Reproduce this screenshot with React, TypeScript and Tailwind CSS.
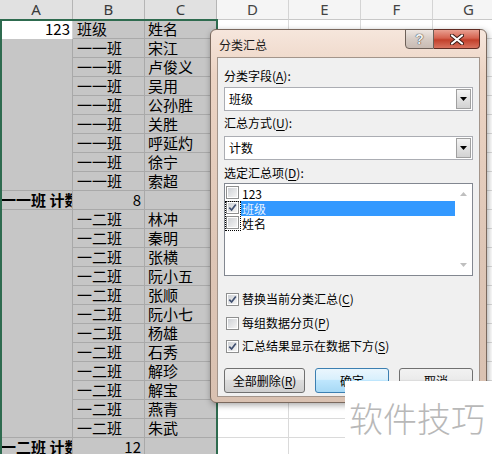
import React from 'react';

const CJK = "font-['Noto_Sans_CJK_SC','Noto_Sans',sans-serif]";

type Row = { a?: string; b?: string; c?: string; kind: 'head' | 'item' | 'count' };

const names1 = ['宋江', '卢俊义', '吴用', '公孙胜', '关胜', '呼延灼', '徐宁', '索超'];
const names2 = ['林冲', '秦明', '张横', '阮小五', '张顺', '阮小七', '杨雄', '石秀', '解珍', '解宝', '燕青', '朱武'];

const rows: Row[] = [
  { a: '123', b: '班级', c: '姓名', kind: 'head' },
  ...names1.map((c) => ({ b: '一一班', c, kind: 'item' as const })),
  { a: '一一班 计数', b: '8', kind: 'count' },
  ...names2.map((c) => ({ b: '一二班', c, kind: 'item' as const })),
  { a: '一二班 计数', b: '12', kind: 'count' },
  { kind: 'item' },
];

function SheetRow({ row, next }: { row: Row; next?: Row }) {
  const aBottom = row.kind === 'count' || next?.kind === 'count';
  return (
    <div className={`flex h-[19px] shrink-0 ${CJK} text-[15px] leading-[18px] text-black`}>
      <div
        className={`w-[73px] shrink-0 whitespace-nowrap border-r ${
          row.kind === 'head' ? 'bg-white border-[#d4d4d4] text-right pr-[2px]' : 'bg-[#c6c6c6] border-[#a9a9a9]'
        } ${aBottom ? 'border-b border-b-[#a9a9a9]' : ''} ${row.kind === 'count' ? 'font-bold pl-[1px] overflow-x-clip' : ''}`}
      >
        {row.a}
      </div>
      <div
        className={`w-[72px] shrink-0 whitespace-nowrap border-r border-b bg-[#c6c6c6] border-[#a9a9a9] ${
          row.kind === 'count' ? 'text-right pr-[3px]' : 'pl-[4px]'
        }`}
      >
        {row.b}
      </div>
      <div className="w-[72px] shrink-0 whitespace-nowrap border-r border-b bg-[#c6c6c6] border-[#a9a9a9] pl-[3px]">
        {row.c}
      </div>
      {[0, 1, 2, 3].map((i) => (
        <div key={i} className="w-[72px] shrink-0 border-r border-b border-[#dadada] bg-white" />
      ))}
    </div>
  );
}

function Check({ checked }: { checked: boolean }) {
  return (
    <span className="relative inline-block h-[13px] w-[13px] shrink-0 border border-[#8e8f8f] bg-white p-[1px]">
      <span className="block h-full w-full bg-[linear-gradient(135deg,#cfd2d6,#f4f4f4)]" />
      {checked && (
        <svg className="absolute left-[1px] top-[1px]" width="9" height="9" viewBox="0 0 9 9">
          <path d="M1.3 4.6 L3.6 7 L7.8 1.4" stroke="#3f4f70" strokeWidth="1.7" fill="none" />
        </svg>
      )}
    </span>
  );
}

function U({ children }: { children: React.ReactNode }) {
  return <span className="underline underline-offset-[2px]">{children}</span>;
}

function Combo({ value }: { value: string }) {
  return (
    <div className="flex h-[24px] w-[249px] items-center border border-[#abadb3] bg-white">
      <span className="flex-1 pl-[4px] text-[12px]">{value}</span>
      <div className="mr-[1px] flex h-[20px] w-[15px] items-center justify-center border border-[#a0a0a0] bg-[linear-gradient(to_bottom,#f4f4f4,#e2e2e2_50%,#d2d2d2)]">
        <svg width="7" height="4" viewBox="0 0 7 4">
          <path d="M0 0 L7 0 L3.5 4 Z" fill="#000" />
        </svg>
      </div>
    </div>
  );
}

function Dialog() {
  const items = [
    { label: '123', checked: false, sel: false },
    { label: '班级', checked: true, sel: true },
    { label: '姓名', checked: false, sel: false },
  ];
  return (
    <div
      className={`absolute left-[210px] top-[29px] flex h-[374px] w-[277px] flex-col rounded-[6px] border border-[#7a695e] bg-[linear-gradient(to_bottom,#f6e6dc,#ecd4c4_12%,#dec6b6_60%,#d9c1b1)] shadow-[1px_2px_6px_rgba(0,0,0,0.35)] ${CJK} text-[12px] text-black`}
    >
      <div className="relative flex h-[27px] shrink-0 items-center pl-[8px] pt-[2px]">
        <span className="text-[12px] text-[#1a1a1a]">分类汇总</span>
        <div className="absolute right-[6px] top-[-1px] flex h-[20px]">
          <div className="flex w-[29px] items-center justify-center rounded-bl-[4px] border border-[#6d6058] bg-[linear-gradient(to_bottom,#eee6e1,#d6cbc4_50%,#c8bbb3)]">
            <span className="font-['Liberation_Sans',sans-serif] text-[14px] font-bold leading-none text-[#f2f2f2] [text-shadow:0_0_1px_#333,0_0_1px_#333]">?</span>
          </div>
          <div className="flex w-[46px] items-center justify-center rounded-br-[4px] border border-l-0 border-[#5e2b22] bg-[linear-gradient(to_bottom,#e9a091,#d5624f_45%,#c2402b_55%,#d8735f)]">
            <svg width="14" height="11" viewBox="0 0 14 11">
              <path d="M2 1.5 L12 9.5 M12 1.5 L2 9.5" stroke="#3a1a14" strokeWidth="4" strokeLinecap="round" />
              <path d="M2 1.5 L12 9.5 M12 1.5 L2 9.5" stroke="#ffffff" strokeWidth="2.2" strokeLinecap="round" />
            </svg>
          </div>
        </div>
      </div>
      <div className="mx-[6px] mb-[5px] flex flex-1 flex-col border border-[#a3958b] bg-[#f0f0f0] pl-[6px] pt-[9px]">
        <div className="h-[18px] leading-[18px]">
          分类字段(<U>A</U>):
        </div>
        <div className="mt-[2px]">
          <Combo value="班级" />
        </div>
        <div className="mt-[3px] h-[18px] leading-[18px]">
          汇总方式(<U>U</U>):
        </div>
        <div className="mt-[4px]">
          <Combo value="计数" />
        </div>
        <div className="mt-[4px] h-[18px] leading-[18px]">
          选定汇总项(<U>D</U>):
        </div>
        <div className="mt-[1px] flex h-[93px] w-[249px] border border-[#828790] bg-white">
          <div className="relative flex-1 pt-[2px]">
            {items.map((it) => (
              <div key={it.label} className="flex h-[15px] items-center pl-[1px]">
                <span className="relative">
                  <Check checked={it.checked} />
                </span>
                <span
                  className={`ml-[2px] flex h-[15px] flex-1 items-center pl-[1px] leading-[14px] ${
                    it.sel ? 'bg-[#3399ff] text-[#e8f3ff]' : ''
                  }`}
                >
                  {it.label}
                </span>
              </div>
            ))}
            <div className="pointer-events-none absolute left-0 top-[17px] h-[30px] w-[16px] border border-dotted border-black" />
          </div>
          <div className="flex w-[17px] flex-col items-center justify-between py-[8px]">
            <svg width="7" height="4" viewBox="0 0 7 4">
              <path d="M0 4 L7 4 L3.5 0 Z" fill="#bfbfbf" />
            </svg>
            <svg width="7" height="4" viewBox="0 0 7 4">
              <path d="M0 0 L7 0 L3.5 4 Z" fill="#bfbfbf" />
            </svg>
          </div>
        </div>
        <div className="mt-[14px] flex h-[18px] items-center gap-[3px] pl-[2px]">
          <Check checked />
          <span>
            替换当前分类汇总(<U>C</U>)
          </span>
        </div>
        <div className="mt-[6px] flex h-[18px] items-center gap-[3px] pl-[2px]">
          <Check checked={false} />
          <span>
            每组数据分页(<U>P</U>)
          </span>
        </div>
        <div className="mt-[5px] flex h-[18px] items-center gap-[3px] pl-[2px]">
          <Check checked />
          <span>
            汇总结果显示在数据下方(<U>S</U>)
          </span>
        </div>
        <div className="mt-[13px] flex gap-[10px]">
          <button className="h-[25px] w-[81px] rounded-[3px] border border-[#707070] bg-[linear-gradient(to_bottom,#f2f2f2,#ebebeb_45%,#dddddd_50%,#cfcfcf)] text-[12px]">
            全部删除(<U>R</U>)
          </button>
          <button className="h-[25px] w-[74px] rounded-[3px] border border-[#3c7fb1] bg-[linear-gradient(to_bottom,#eaf6fd,#d9f0fc_45%,#bee6fd_50%,#a7d9f5)] text-[12px]">
            确定
          </button>
          <button className="h-[25px] w-[74px] rounded-[3px] border border-[#707070] bg-[linear-gradient(to_bottom,#f2f2f2,#ebebeb_45%,#dddddd_50%,#cfcfcf)] text-[12px]">
            取消
          </button>
        </div>
      </div>
    </div>
  );
}

export default function App() {
  const letters = ['A', 'B', 'C', 'D', 'E', 'F', 'G'];
  return (
    <div className="relative h-[454px] w-[492px] overflow-hidden bg-white">
      <div className="flex flex-col">
        <div className="flex h-[20px] shrink-0 font-['Noto_Sans',sans-serif] text-[15px] leading-[19px]">
          {letters.map((l, i) => (
            <div
              key={l}
              className={`${i === 0 ? 'w-[73px]' : 'w-[72px]'} shrink-0 border-r border-b text-center ${
                i < 3
                  ? 'border-r-[#b5b5b5] border-b-[#b5b5b5] bg-[#e1e1e1] text-[#3a3a3a]'
                  : 'border-r-[#d4d4d4] border-b-[#c8c8c8] bg-[#f5f5f5] text-[#444]'
              }`}
            >
              {l}
            </div>
          ))}
        </div>
        {rows.map((r, i) => (
          <SheetRow key={i} row={r} next={rows[i + 1]} />
        ))}
      </div>
      <div className="pointer-events-none absolute left-0 top-[19px] h-[460px] w-[218px] border-2 border-[#2e6b4f]" />
      <Dialog />
      <div className="absolute left-[345px] top-[381px] flex h-[73px] w-[147px] items-center bg-white pl-[4px]">
        <span className={`${CJK} text-[34px] font-light leading-none text-[#b8b8b8]`}>软件技巧</span>
      </div>
    </div>
  );
}
